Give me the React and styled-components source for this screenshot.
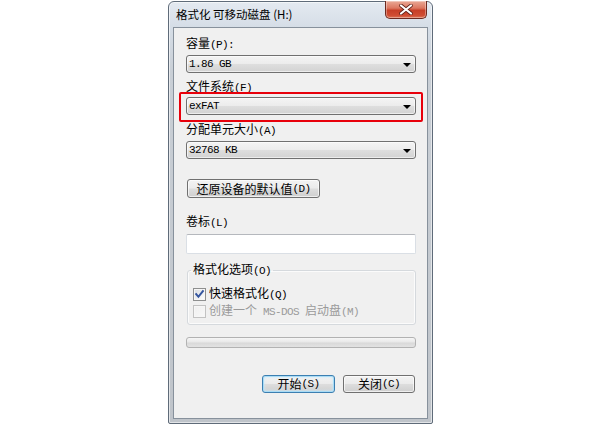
import React from 'react';
import styled, { createGlobalStyle } from 'styled-components';

const Global = createGlobalStyle`
  html, body { margin: 0; padding: 0; background: #ffffff; }
  body {
    width: 602px; height: 427px; overflow: hidden;
    font-family: "Noto Sans CJK SC", "Noto Sans", sans-serif;
    color: #000;
  }
  * { box-sizing: border-box; }
`;

const Page = styled.div`
  width: 602px;
  height: 427px;
  padding: 1px 0 0 168px;
`;

const Window = styled.div`
  width: 265px;
  height: 423px;
  border: 1px solid #5f6b79;
  border-radius: 6px 6px 2px 2px;
  background: linear-gradient(to bottom, #e4eaf1 0px, #d6dee7 24px, #c9cfd6 70px, #bfc4ca 100%);
  display: flex;
  flex-direction: column;
  box-shadow: inset 0 0 0 1px rgba(255,255,255,0.55);
`;

const TitleBar = styled.div`
  height: 25px;
  flex: none;
  display: flex;
  justify-content: space-between;
  align-items: flex-start;
  padding-left: 7px;
`;

const Title = styled.div`
  font-size: 11.5px;
  line-height: 16px;
  padding-top: 4px;
  color: #000;
  white-space: nowrap;
`;

const CloseBtn = styled.div`
  width: 42px;
  height: 18px;
  margin-top: -1px;
  margin-right: 5px;
  border: 1px solid #6d2a20;
  border-top: none;
  border-radius: 0 0 5px 5px;
  background: linear-gradient(to bottom, #eaa996 0%, #dc7760 42%, #c73f27 55%, #d04d33 85%, #de7656 100%);
  box-shadow: inset 0 0 0 1px rgba(255,255,255,0.35);
  display: flex;
  align-items: center;
  justify-content: center;
`;

const Client = styled.div`
  flex: 1;
  margin: 0 4px 4px 4px;
  border: 1px solid #87919c;
  background: #f0f0f0;
  padding: 7px 11px 0 12px;
  display: flex;
  flex-direction: column;
`;

const Label = styled.div`
  height: 16px;
  line-height: 16px;
  font-size: 12px;
  margin-top: ${p => p.$mt || 0}px;
  white-space: nowrap;
  color: ${p => (p.$disabled ? '#9a9a9a' : '#000')};
`;

const Mn = styled.span`
  font-family: "Liberation Mono", "DejaVu Sans Mono", monospace;
  font-size: 11px;
  letter-spacing: -0.6px;
  white-space: pre;
`;

const Select = styled.div`
  height: 18px;
  margin-top: ${p => p.$mt || 0}px;
  border: 1px solid #707070;
  border-radius: 3px;
  background: linear-gradient(to bottom, #f4f4f4 0%, #ececec 48%, #dedede 52%, #d2d2d2 100%);
  box-shadow: inset 0 0 0 1px rgba(255,255,255,0.6);
  display: flex;
  align-items: center;
  justify-content: space-between;
  padding: 0 4px 0 2px;
  font-family: "Liberation Mono", "DejaVu Sans Mono", monospace;
  font-size: 11px;
  letter-spacing: -0.6px;
  line-height: 16px;
`;

const Arrow = styled.span`
  width: 0;
  height: 0;
  border-left: 4px solid transparent;
  border-right: 4px solid transparent;
  border-top: 4px solid #000;
  margin-top: 1px;
`;

const Highlight = styled.div`
  margin: ${p => p.$mt - 5}px -7px -7px -7px;
  padding: 3px 5px 5px 5px;
  border: 2px solid #e8000b;
  border-radius: 2px;
`;

const Button = styled.div`
  height: ${p => p.$h || 18}px;
  width: ${p => p.$w}px;
  margin-top: ${p => p.$mt || 0}px;
  margin-left: ${p => p.$ml || 0}px;
  border: 1px solid ${p => (p.$default ? '#3c7fb1' : '#707070')};
  border-radius: 3px;
  background: linear-gradient(to bottom, #f3f3f3 0%, #ebebeb 48%, #dddddd 52%, #cfcfcf 100%);
  box-shadow: ${p => (p.$default
    ? 'inset 0 0 0 1px #a9dcf6, inset 0 0 3px 1px #c8eafb'
    : 'inset 0 0 0 1px rgba(255,255,255,0.65)')};
  display: flex;
  align-items: center;
  justify-content: center;
  font-size: 12px;
  line-height: 16px;
  white-space: nowrap;
  flex: none;
`;

const TextBox = styled.div`
  height: 20px;
  margin-top: ${p => p.$mt || 0}px;
  background: #fff;
  border: 1px solid #dadfe5;
  border-top-color: #b5b8bd;
  border-radius: 2px;
`;

const Group = styled.fieldset`
  margin: ${p => p.$mt || 0}px 0 0 1px;
  padding: 0 5px 6px 5px;
  border: 1px solid #d5d9dd;
  border-radius: 3px;
  box-shadow: inset 0 0 0 1px #fbfbfb;
  min-inline-size: 0;
`;

const Legend = styled.legend`
  padding: 0 2px;
  margin-left: -2px;
  font-size: 12px;
  line-height: 14px;
  white-space: nowrap;
`;

const CheckRow = styled.div`
  display: flex;
  align-items: center;
  gap: 3px;
  height: 14px;
  margin-top: ${p => p.$mt || 0}px;
  font-size: 12px;
  line-height: 14px;
  white-space: nowrap;
  color: ${p => (p.$disabled ? '#9a9a9a' : '#000')};
`;

const Progress = styled.div`
  height: 11px;
  margin-top: ${p => p.$mt || 0}px;
  border: 1px solid #b2b2b2;
  border-radius: 3px;
  background: linear-gradient(to bottom, #f6f6f6 0%, #e8e8e8 45%, #d9d9d9 55%, #e2e2e2 100%);
`;

const ButtonRow = styled.div`
  display: flex;
  justify-content: flex-end;
  gap: 8px;
  margin-top: ${p => p.$mt || 0}px;
  padding-right: 1px;
`;

const CheckBox = ({ checked, disabled }) => (
  <svg width="13" height="13" viewBox="0 0 13 13" style={{ flex: 'none' }}>
    <defs>
      <linearGradient id={checked ? 'cbg1' : 'cbg2'} x1="0" y1="0" x2="1" y2="1">
        <stop offset="0" stopColor={disabled ? '#f0f0f0' : '#dcdfe3'} />
        <stop offset="1" stopColor={disabled ? '#f7f7f7' : '#fbfbfb'} />
      </linearGradient>
    </defs>
    <rect x="0.5" y="0.5" width="12" height="12" fill="#f6f6f6" stroke={disabled ? '#c2c2c2' : '#8e8f8f'} />
    <rect x="2" y="2" width="9" height="9" fill={`url(#${checked ? 'cbg1' : 'cbg2'})`} />
    {checked && (
      <path d="M3.2 6.2 L5.4 8.8 L9.9 3.2" stroke="#34559f" strokeWidth="2" fill="none" strokeLinecap="square" />
    )}
  </svg>
);

const CloseX = () => (
  <svg width="14" height="11" viewBox="0 0 14 11">
    <path d="M2 1.5 L12 9.5 M12 1.5 L2 9.5" stroke="#5a1d14" strokeWidth="3.6" strokeLinecap="round" />
    <path d="M2 1.5 L12 9.5 M12 1.5 L2 9.5" stroke="#ffffff" strokeWidth="2.2" strokeLinecap="round" />
  </svg>
);

export default function App() {
  return (
    <>
      <Global />
      <Page>
        <Window>
          <TitleBar>
            <Title>格式化 可移动磁盘 (H:)</Title>
            <CloseBtn><CloseX /></CloseBtn>
          </TitleBar>
          <Client>
            <Label>容量<Mn>(P):</Mn></Label>
            <Select $mt={4}>1.86 GB<Arrow /></Select>
            <Label $mt={5}>文件系统<Mn>(F)</Mn></Label>
            <Highlight $mt={3}>
              <Select>exFAT<Arrow /></Select>
            </Highlight>
            <Label $mt={6}>分配单元大小<Mn>(A)</Mn></Label>
            <Select $mt={4}>32768 KB<Arrow /></Select>
            <Button $w={133} $h={19} $mt={20} $ml={1}>还原设备的默认值<Mn>(D)</Mn></Button>
            <Label $mt={15}>卷标<Mn>(L)</Mn></Label>
            <TextBox $mt={5} />
            <Group $mt={8}>
              <Legend>格式化选项<Mn>(O)</Mn></Legend>
              <CheckRow $mt={9}>
                <CheckBox checked />
                <span>快速格式化<Mn>(Q)</Mn></span>
              </CheckRow>
              <CheckRow $mt={3} $disabled>
                <CheckBox disabled />
                <span>创建一个<Mn> MS-DOS </Mn>启动盘<Mn>(M)</Mn></span>
              </CheckRow>
            </Group>
            <Progress $mt={12} />
            <ButtonRow $mt={27}>
              <Button $w={73} $default>开始<Mn>(S)</Mn></Button>
              <Button $w={72}>关闭<Mn>(C)</Mn></Button>
            </ButtonRow>
          </Client>
        </Window>
      </Page>
    </>
  );
}
